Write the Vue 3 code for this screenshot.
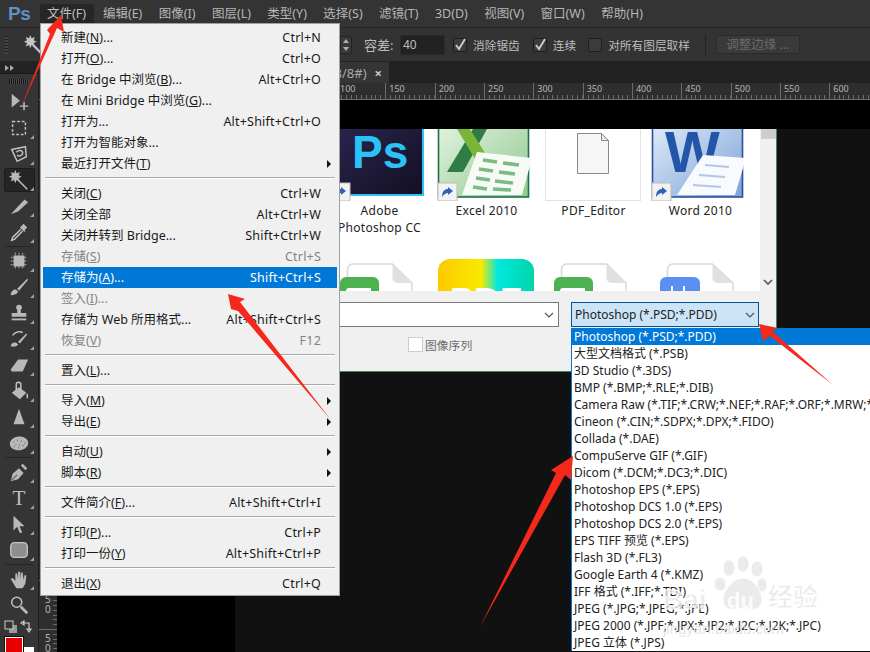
<script setup>
const topMenus = ['文件(F)', '编辑(E)', '图像(I)', '图层(L)', '类型(Y)', '选择(S)', '滤镜(T)', '3D(D)', '视图(V)', '窗口(W)', '帮助(H)']

const rawMenu = [
  ['新建(&N)...', 'Ctrl+N'], ['打开(&O)...', 'Ctrl+O'], ['在 Bridge 中浏览(&B)...', 'Alt+Ctrl+O'],
  ['在 Mini Bridge 中浏览(&G)...', ''], ['打开为...', 'Alt+Shift+Ctrl+O'], ['打开为智能对象...', ''],
  ['最近打开文件(&T)', '', 'sub'], null,
  ['关闭(&C)', 'Ctrl+W'], ['关闭全部', 'Alt+Ctrl+W'], ['关闭并转到 Bridge...', 'Shift+Ctrl+W'],
  ['存储(&S)', 'Ctrl+S', 'off'], ['存储为(&A)...', 'Shift+Ctrl+S', 'on'], ['签入(&I)...', '', 'off'],
  ['存储为 Web 所用格式...', 'Alt+Shift+Ctrl+S'], ['恢复(&V)', 'F12', 'off'], null,
  ['置入(&L)...', ''], null,
  ['导入(&M)', '', 'sub'], ['导出(&E)', '', 'sub'], null,
  ['自动(&U)', '', 'sub'], ['脚本(&R)', '', 'sub'], null,
  ['文件简介(&F)...', 'Alt+Shift+Ctrl+I'], null,
  ['打印(&P)...', 'Ctrl+P'], ['打印一份(&Y)', 'Alt+Shift+Ctrl+P'], null,
  ['退出(&X)', 'Ctrl+Q']
]
const menu = rawMenu.map((r, i) => {
  if (!r) return { id: i, sep: true }
  const k = r[0].indexOf('&')
  return {
    id: i,
    before: k < 0 ? r[0] : r[0].slice(0, k),
    key: k < 0 ? '' : r[0][k + 1],
    after: k < 0 ? '' : r[0].slice(k + 2),
    short: r[1],
    kind: r[2] || ''
  }
})

const formats = ['Photoshop (*.PSD;*.PDD)', '大型文档格式 (*.PSB)', '3D Studio (*.3DS)', 'BMP (*.BMP;*.RLE;*.DIB)',
  'Camera Raw (*.TIF;*.CRW;*.NEF;*.RAF;*.ORF;*.MRW;*.DNG)', 'Cineon (*.CIN;*.SDPX;*.DPX;*.FIDO)', 'Collada (*.DAE)',
  'CompuServe GIF (*.GIF)', 'Dicom (*.DCM;*.DC3;*.DIC)', 'Photoshop EPS (*.EPS)', 'Photoshop DCS 1.0 (*.EPS)',
  'Photoshop DCS 2.0 (*.EPS)', 'EPS TIFF 预览 (*.EPS)', 'Flash 3D (*.FL3)', 'Google Earth 4 (*.KMZ)',
  'IFF 格式 (*.IFF;*.TDI)', 'JPEG (*.JPG;*.JPEG;*.JPE)', 'JPEG 2000 (*.JPF;*.JPX;*.JP2;*.J2C;*.J2K;*.JPC)', 'JPEG 立体 (*.JPS)']

const rulerMarks = [100, 150, 200, 250, 300, 350, 400, 450, 500, 550, 600]
const vMarks = ['450', '500']

const wandF = 'M8 1l1.4 3.6L13 3.2l-1.4 3.6L15 8.5l-3.4 1.4L13 13.5l-3.6-1.4L8 15.5l-1.4-3.4L3 13.5l1.4-3.6L1 8.5l3.4-1.7L3 3.2l3.6 1.4z'
const tools = [
  { f: ['M4 3v15l9-7.5z'], s: ['M13 16.5h9M17.5 12v9'], flag: false },
  { s: ['M5 5h14v14H5z'], dash: true, flag: true },
  { s: ['M4 7l15-3 1 11-10 5z', 'M9 10c3-3 7-2 7 1s-5 4-6 2'], flag: true },
  { f: [wandF], s: ['M11 12l10 10'], flag: true, active: true },
  { f: ['M3 21L18 5l4 3-11 10z'], flag: true },
  { f: ['M14 6l3-3 4 4-3 3 1 1-1 1-5-5 1-1z'], s: ['M14 9l-9 9-1 3 3-1 9-9'], flag: true },
  'sep',
  { f: ['M6 6h12v12H6z'], s: ['M3 8h18M3 12h18M3 16h18M8 3v18M12 3v18M16 3v18'], thin: true, flag: true },
  { f: ['M3 21c0-4 3-7 6-6l2 2c-1 3-4 4-8 4z', 'M10 14L21 3l1 1-10 12z'], flag: true },
  { f: ['M12 3a3 3 0 0 1 2 5.4V12h6v4H4v-4h6V8.4A3 3 0 0 1 12 3z', 'M4 18h16v2H4z'], flag: true },
  { f: ['M3 20c0-3 3-5 6-4l2 2c-1 2-4 3-8 2z', 'M11 15l9-9 1 1-8 10z'], s: ['M5 8c3-4 8-5 11-3'], flag: true },
  { f: ['M3 17L11 6h11l-6 13H4z'], flag: true },
  { f: ['M4 14l8-6 8 6-7 7z'], s: ['M9 11V5a2.5 2.5 0 0 1 5 0v6', 'M21 15v5'], flag: true },
  { f: ['M12 3l6 17H6z'], flag: true },
  { f: ['M2 13c0-5 6-8 10-8s10 2 10 7-6 8-10 8-10-2-10-7z'], d: ['M6 11h1M10 9h1M14 10h1M18 12h1M8 14h1M12 14h1M16 15h1M6 16h1M11 17h1'], flag: true },
  'sep',
  { f: ['M3 22l2-8 7-6 5 5-6 7z', 'M14 5l2-2 5 5-2 2z'], d: ['M4 21l6-6'], flag: true },
  { text: 'T', flag: true },
  { f: ['M6 3v16l4-4 3 7 2.5-1-3-6.5H18z'], flag: true },
  { shape: true, flag: true },
  'sep',
  { f: ['M3 12l2-1 3 3V6l2 0 1 6V4h2l1 8V5h2l1 8 1-5h2l-1 9-3 5H9z'], flag: true },
  { s: ['M4 9a5.5 5.5 0 1 0 11 0a5.5 5.5 0 1 0-11 0'], thick: ['M14 14l7 7'], flag: false }
]
const toolList = tools.map((t, i) => ({ ...t, id: i, sep: t === 'sep' }))
</script>

<template>
  <div class="app">
    <header class="menubar">
      <span class="logo">Ps</span>
      <div class="top-items">
        <span v-for="(m, i) in topMenus" :key="m" class="top-item" :class="{ open: i === 0 }">{{ m }}</span>
      </div>
    </header>

    <div class="options">
      <span class="opt-grip"></span>
      <svg class="opt-wand" viewBox="0 0 24 24" width="22" height="22">
        <path :d="wandF" fill="#c4c4c4" />
        <path d="M11 12l11 11" stroke="#c4c4c4" stroke-width="2.5" />
      </svg>
      <span class="stepper">
        <svg viewBox="0 0 8 12" width="8" height="12"><path d="M4 0l3 4H1zM4 12L1 8h6z" fill="#b0b0b0" /></svg>
      </span>
      <span class="opt-label tol">容差:</span>
      <span class="opt-input">40</span>
      <span class="chk first"><svg viewBox="0 0 14 14" width="14" height="14"><path d="M3 7l3 4 6-10" fill="none" stroke="#c8c8c8" stroke-width="2" /></svg></span>
      <span class="opt-label">消除锯齿</span>
      <span class="chk second"><svg viewBox="0 0 14 14" width="14" height="14"><path d="M3 7l3 4 6-10" fill="none" stroke="#c8c8c8" stroke-width="2" /></svg></span>
      <span class="opt-label">连续</span>
      <span class="chk"></span>
      <span class="opt-label">对所有图层取样</span>
      <span class="opt-sep"></span>
      <span class="opt-btn">调整边缘 ...</span>
    </div>

    <div class="work">
      <aside class="toolbar">
        <div class="tb-head"><svg viewBox="0 0 10 6" width="10" height="6"><path d="M0 0l4 3-4 3zM5 0l4 3-4 3z" fill="#a8a8a8" /></svg></div>
        <div class="tb-grip"></div>
        <template v-for="t in toolList" :key="t.id">
          <div v-if="t.sep" class="tb-sep"></div>
          <div v-else class="tool" :class="{ active: t.active }">
            <svg viewBox="0 0 24 24" width="22" height="22">
              <text v-if="t.text" x="12" y="20" text-anchor="middle" class="t-glyph">{{ t.text }}</text>
              <rect v-if="t.shape" x="3" y="4" width="18" height="16" rx="4" fill="#8e8e8e" stroke="#c4c4c4" stroke-width="1.5" />
              <path v-for="d in t.f" :key="d" :d="d" fill="#b8b8b8" />
              <path v-for="d in t.s" :key="d" :d="d" fill="none" stroke="#c0c0c0" :stroke-width="t.thin ? 1 : 1.6" :stroke-dasharray="t.dash ? '3 2' : t.thin ? '2 1' : null" />
              <path v-for="d in t.d" :key="d" :d="d" fill="none" stroke="#6c6c6c" stroke-width="1.4" />
              <path v-for="d in t.thick" :key="d" :d="d" stroke="#b8b8b8" stroke-width="3" />
            </svg>
            <span v-if="t.flag" class="flag"></span>
          </div>
        </template>
        <div class="swap-row">
          <svg viewBox="0 0 30 14" width="30" height="14">
            <rect x="5" y="5" width="8" height="8" fill="#999" />
            <rect x="1" y="1" width="8" height="8" fill="#333" stroke="#ccc" />
            <path d="M19 3h6v7M17 3l3-2v4zM25 12l-2-3h4z" fill="none" stroke="#ccc" stroke-width="1.2" />
          </svg>
        </div>
        <div class="swatches">
          <span class="fg"></span>
          <span class="bg"></span>
        </div>
      </aside>

      <main class="doc">
        <div class="tabs"><div class="tab"><span>100% (RGB/8#)</span><span class="tab-x">×</span></div></div>
        <div class="ruler">
          <div v-for="m in rulerMarks" :key="m" class="mark"><span>{{ m }}</span></div>
        </div>
        <div class="doc-body">
          <div class="vruler">
            <div v-for="v in vMarks" :key="v" class="vmark"><span v-for="(c, i) in v" :key="i">{{ c }}</span></div>
          </div>
          <div class="stage">
            <div class="band"></div>
            <div class="black-col"></div>
            <section class="dialog">
              <div class="browser">
                <div class="files">
                  <div class="cell">
                    <svg viewBox="0 0 107 72" width="107" height="72">
                      <defs><linearGradient id="psg" x1="0" y1="0" x2="1" y2="1"><stop offset="0" stop-color="#2c2750" /><stop offset="1" stop-color="#120f24" /></linearGradient></defs>
                      <rect x="4" y="-10" width="93" height="76" fill="url(#psg)" stroke="#2bc3f7" stroke-width="2" />
                      <text x="26" y="39" class="ps-text">Ps</text>
                      <rect x="5" y="54" width="19" height="18" fill="#f2f2f2" stroke="#bbb" />
                      <path d="M9 68c0-6 3-8 6-8v-2l5 4-5 4v-2c-2 0-4 1-6 4z" fill="#2b63b5" />
                    </svg>
                    <div class="label">Adobe<br />Photoshop CC</div>
                  </div>
                  <div class="cell">
                    <svg viewBox="0 0 107 72" width="107" height="72">
                      <defs><linearGradient id="xlg" x1="0" y1="0" x2="1" y2="1"><stop offset="0" stop-color="#e6f4e2" /><stop offset="1" stop-color="#8fc98f" /></linearGradient></defs>
                      <rect x="5.5" y="-10" width="90" height="78" fill="url(#xlg)" stroke="#1e7145" stroke-width="1.6" />
                      <polygon points="40,0 54,0 30,43 14,43" fill="#2f7d44" />
                      <polygon points="24,0 37,0 64,43 50,43" fill="#7ab53a" />
                      <polygon points="44,23 99,29 89,66 29,66" fill="#f7fbf6" />
                      <path d="M50 31l14 2M70 34l16 2M46 40l14 2M66 43l16 2M43 49l14 2M62 52l18 2M40 58l14 2M60 60l18 1" stroke="#7dbb84" stroke-width="3.5" />
                      <rect x="5" y="54" width="19" height="18" fill="#f2f2f2" stroke="#bbb" />
                      <path d="M9 68c0-6 3-8 6-8v-2l5 4-5 4v-2c-2 0-4 1-6 4z" fill="#2b63b5" />
                    </svg>
                    <div class="label">Excel 2010</div>
                  </div>
                  <div class="cell">
                    <svg viewBox="0 0 107 72" width="107" height="72">
                      <rect x="5.5" y="-10" width="95" height="81.5" fill="#fff" stroke="#e2e2e2" />
                      <path d="M37.5 4.5h24l7 7v33h-31z" fill="#f6f6f6" stroke="#8a8a8a" />
                      <path d="M61.5 4.5v7h7z" fill="#e4e4e4" stroke="#8a8a8a" />
                    </svg>
                    <div class="label">PDF_Editor</div>
                  </div>
                  <div class="cell">
                    <svg viewBox="0 0 107 72" width="107" height="72">
                      <defs><linearGradient id="wdg" x1="0" y1="0" x2="1" y2="1"><stop offset="0" stop-color="#e3edf8" /><stop offset="1" stop-color="#7ba3d8" /></linearGradient></defs>
                      <rect x="5.5" y="-10" width="90" height="78" fill="url(#wdg)" stroke="#2b4f9e" stroke-width="1.6" />
                      <text x="18" y="43" class="word-text">W</text>
                      <polygon points="56,26 99,29 88,66 30,66" fill="#f8fafd" />
                      <path d="M58 36l24 2M52 46l26 2M46 56l28 2" stroke="#b4c6e4" stroke-width="2" />
                      <rect x="5" y="54" width="19" height="18" fill="#f2f2f2" stroke="#bbb" />
                      <path d="M9 68c0-6 3-8 6-8v-2l5 4-5 4v-2c-2 0-4 1-6 4z" fill="#2b63b5" />
                    </svg>
                    <div class="label">Word 2010</div>
                  </div>
                  <div class="cell low">
                    <svg viewBox="0 0 107 32" width="107" height="32">
                      <path d="M21.5 10a5 5 0 0 1 5-5h40l19.500 19v10h-64.500z" fill="#fff" stroke="#d8d8d8" stroke-width="1.500" />
                      <path d="M66.500 5v14a5 5 0 0 0 5 5h14.500z" fill="#e0e0e0" />
                      <rect x="14" y="18" width="39" height="30" rx="6" fill="#4cb250" />
                      <path d="M20 32q0-3 3-3h22v3z" fill="#fff" />
                    </svg>
                  </div>
                  <div class="cell low">
                    <svg viewBox="0 0 107 32" width="107" height="32">
                      <defs><linearGradient id="pdfg" x1="0" y1="0" x2="1" y2="0"><stop offset="0" stop-color="#fdc800" /><stop offset=".45" stop-color="#f8ea00" /><stop offset=".62" stop-color="#00e8e0" /><stop offset="1" stop-color="#00d6a8" /></linearGradient></defs>
                      <rect x="5" y="0" width="96" height="48" rx="12" fill="url(#pdfg)" />
                      <text x="53" y="55" text-anchor="middle" class="pdf-text">PDF</text>
                    </svg>
                  </div>
                  <div class="cell low">
                    <svg viewBox="0 0 107 32" width="107" height="32">
                      <path d="M21.500 10a5 5 0 0 1 5-5h40l19.500 19v10h-64.500z" fill="#fff" stroke="#d8d8d8" stroke-width="1.500" />
                      <path d="M66.500 5v14a5 5 0 0 0 5 5h14.500z" fill="#e0e0e0" />
                      <rect x="14" y="18" width="39" height="30" rx="6" fill="#4cb250" />
                      <path d="M20 32q0-3 3-3h22v3z" fill="#fff" />
                    </svg>
                  </div>
                  <div class="cell low">
                    <svg viewBox="0 0 107 32" width="107" height="32">
                      <path d="M20.500 10a5 5 0 0 1 5-5h40l20.500 19v10h-65.500z" fill="#fff" stroke="#d8d8d8" stroke-width="1.500" />
                      <path d="M65.500 5v14a5 5 0 0 0 5 5h15.500z" fill="#e0e0e0" />
                      <rect x="13" y="18" width="40" height="30" rx="6" fill="#5b8ff2" />
                      <path d="M24 32v-5h2v5zM36 32v-5h2v5z" fill="#fff" />
                    </svg>
                  </div>
                </div>
                <div class="scrollbar">
                  <span class="thumb"></span>
                  <svg viewBox="0 0 10 6" width="10" height="6"><path d="M1 1l4 4 4-4" fill="none" stroke="#555" stroke-width="1.600" /></svg>
                </div>
              </div>
              <div class="footer">
                <div class="selects">
                  <div class="combo name">
                    <svg viewBox="0 0 10 6" width="10" height="6"><path d="M1 1l4 4 4-4" fill="none" stroke="#555" stroke-width="1.200" /></svg>
                  </div>
                  <div class="format-wrap">
                    <div class="combo format">
                      <span>Photoshop (*.PSD;*.PDD)</span>
                      <svg viewBox="0 0 10 6" width="10" height="6"><path d="M1 1l4 4 4-4" fill="none" stroke="#555" stroke-width="1.200" /></svg>
                    </div>
                    <ul class="dropdown">
                      <li v-for="(f, i) in formats" :key="f" :class="{ sel: i === 0 }">{{ f }}</li>
                    </ul>
                  </div>
                </div>
                <div class="seq"><span class="seq-box"></span><span>图像序列</span></div>
              </div>
            </section>
          </div>
        </div>
      </main>
    </div>

    <nav class="filemenu">
      <template v-for="m in menu" :key="m.id">
        <div v-if="m.sep" class="msep"></div>
        <div v-else class="mrow" :class="m.kind">
          <span class="mlabel">{{ m.before }}<u v-if="m.key">{{ m.key }}</u>{{ m.after }}</span>
          <span class="mshort">{{ m.short }}</span>
          <span v-if="m.kind === 'sub'" class="marrow"></span>
        </div>
      </template>
    </nav>

    <svg class="watermark" viewBox="0 0 170 90" width="170" height="90">
      <g fill="#e4e4e4" fill-opacity=".75" stroke="#fff" stroke-width=".8">
        <ellipse cx="69" cy="12" rx="6" ry="8" />
        <ellipse cx="83" cy="8" rx="6" ry="8" />
        <ellipse cx="97" cy="13" rx="6" ry="8" />
        <ellipse cx="60" cy="28" rx="6" ry="7" />
        <ellipse cx="102" cy="29" rx="5" ry="7" />
        <path d="M83 22c10 0 19 12 19 22 0 7-6 10-10 9-5-1-13-1-18 0-5 1-11-2-11-9 0-9 10-22 20-22z" />
        <text x="3" y="53" class="wm-bai">Bai</text>
        <text x="108" y="50" class="wm-jy">经验</text>
      </g>
      <text x="67" y="52" class="wm-du">du</text>
      <text x="3" y="78" class="wm-url">jingyan.baidu.com</text>
    </svg>

    <svg class="arrows" viewBox="0 0 870 652" width="870" height="652">
      <g fill="#f5281c">
        <polygon points="20,110 50,34 47,30 61,15 64,32 57,28" />
        <polygon points="228,294 245,299 240,302 331,420 238,311 231,309" />
        <polygon points="759,324 778,328 772,331 833,385 770,336 763,341" />
        <polygon points="573,456 571,480 565,475 480,627 556,473 551,470" />
      </g>
    </svg>
  </div>
</template>

<style scoped>
.app {
  position: relative;
  width: 870px;
  height: 652px;
  overflow: hidden;
  display: flex;
  flex-direction: column;
  background: #111;
  font-family: "Noto Sans", "Noto Sans CJK SC", sans-serif;
  font-size: 13px;
  color: #bdbdbd;
}
.menubar {
  height: 28px;
  flex: none;
  background: #343434;
  border-bottom: 1px solid #262626;
  box-sizing: border-box;
  display: flex;
  align-items: center;
}
.logo {
  width: 40px;
  padding-left: 8px;
  box-sizing: border-box;
  font: bold 19px "Liberation Sans", sans-serif;
  letter-spacing: -.5px;
  color: #5f90c2;
}
.top-items {
  display: flex;
  gap: 16.4px;
  padding-left: 7px;
  font-size: 12.5px;
  color: #b6b6b6;
  white-space: nowrap;
}
.top-item {
  line-height: 20px;
}
.top-item.open {
  margin-left: -7px;
  margin-right: -7.5px;
  padding: 0 8px 0 7px;
  background: #262626;
  border-radius: 2px;
  color: #c0c0c0;
}
.options {
  height: 34px;
  flex: none;
  box-sizing: border-box;
  background: #333;
  border-bottom: 1px solid #232323;
  display: flex;
  align-items: center;
  padding-left: 5px;
  font-size: 11.7px;
}
.opt-grip {
  width: 3px;
  height: 18px;
  background: repeating-linear-gradient(#1e1e1e 0 1px, #444 1px 3px);
}
.opt-wand {
  margin-left: 15px;
}
.stepper {
  margin-left: 295px;
  width: 12px;
  height: 18px;
  box-sizing: border-box;
  background: #3a3a3a;
  border: 1px solid #222;
  border-radius: 0 3px 3px 0;
  display: flex;
  align-items: center;
  justify-content: center;
}
.opt-label {
  margin-left: 6px;
  white-space: nowrap;
}
.opt-label.tol {
  margin-left: 12px;
  width: 36px;
  font-size: 13px;
}
.opt-input {
  width: 45px;
  height: 20px;
  box-sizing: border-box;
  margin-right: 8px;
  padding-left: 2px;
  background: #222;
  border: 1px solid #2a2a2a;
  line-height: 18px;
  font-size: 12px;
}
.chk {
  width: 14px;
  height: 14px;
  box-sizing: border-box;
  margin-left: 12px;
  background: #3c3c3c;
  border: 1px solid #1e1e1e;
  border-radius: 2px;
  display: block;
  line-height: 0;
}
.chk.first {
  margin-left: 0;
}
.chk.second {
  margin-left: 13px;
}
.chk svg {
  margin: -1px;
}
.opt-sep {
  width: 1px;
  height: 22px;
  margin-left: 15px;
  background: #232323;
}
.opt-btn {
  margin-left: 10px;
  width: 84px;
  height: 19px;
  box-sizing: border-box;
  background: #3a3a3a;
  border: 1px solid #2a2a2a;
  border-radius: 2px;
  color: #6a6a6a;
  font-size: 12.500px;
  text-align: center;
  line-height: 17px;
  white-space: nowrap;
}
.work {
  flex: 1;
  display: flex;
  min-height: 0;
}
.toolbar {
  width: 39px;
  flex: none;
  background: #353535;
  border-right: 1px solid #202020;
  box-sizing: border-box;
  display: flex;
  flex-direction: column;
  overflow: hidden;
}
.tb-head {
  height: 11px;
  background: #232323;
  border-bottom: 1px solid #1a1a1a;
  padding-left: 5px;
  display: flex;
  align-items: center;
  flex: none;
}
.tb-grip {
  height: 5px;
  margin: 5px 9px 5px;
  background: repeating-linear-gradient(90deg, #151515 0 1px, #4a4a4a 1px 2px);
  flex: none;
}
.tool {
  height: 26px;
  flex: none;
  position: relative;
  display: flex;
  align-items: center;
  justify-content: center;
}
.tool.active::before {
  content: "";
  position: absolute;
  left: 4px;
  right: 3px;
  top: 1px;
  bottom: 1px;
  background: #252525;
  border: 1px solid #1b1b1b;
  border-radius: 2px;
}
.tool svg {
  position: relative;
}
.t-glyph {
  font: 23px "Liberation Serif", serif;
  fill: #c0c0c0;
}
.flag {
  position: absolute;
  right: 4px;
  bottom: 2px;
  width: 0;
  height: 0;
  border-left: 4px solid transparent;
  border-bottom: 4px solid #a0a0a0;
}
.tb-sep {
  height: 3px;
  flex: none;
  position: relative;
  margin: 0 5px;
  background: linear-gradient(transparent 1px, #232323 1px 2px, transparent 2px);
}
.swap-row {
  height: 14px;
  padding: 2px 0 0 4px;
  flex: none;
}
.swatches {
  position: relative;
  height: 20px;
  margin-top: 3px;
  flex: none;
}
.fg {
  position: absolute;
  left: 5px;
  top: 0;
  width: 18px;
  height: 20px;
  box-sizing: border-box;
  background: #e60000;
  border: 1px solid #fff;
  outline: 1px solid #111;
  z-index: 1;
}
.bg {
  position: absolute;
  left: 23px;
  top: 10px;
  width: 11px;
  height: 14px;
  background: #fff;
}
.doc {
  flex: 1;
  min-width: 0;
  display: flex;
  flex-direction: column;
}
.tabs {
  height: 21px;
  flex: none;
  background: #212121;
  display: flex;
}
.tab {
  width: 350px;
  background: #353535;
  color: #a8a8a8;
  display: flex;
  justify-content: flex-end;
  align-items: center;
  gap: 8px;
  padding-right: 7px;
  box-sizing: border-box;
  white-space: nowrap;
  overflow: hidden;
}
.tab-x {
  font-size: 13px;
  font-weight: bold;
  color: #c8c8c8;
}
.ruler {
  height: 17px;
  flex: none;
  box-sizing: border-box;
  background: #2e2e2e;
  border-bottom: 1px solid #6c6c6c;
  padding-left: 297px;
  display: flex;
}
.mark {
  width: 49.33px;
  flex: none;
  box-sizing: border-box;
  border-left: 1px solid #6c6c6c;
  padding-left: 3px;
  font-size: 9px;
  line-height: 12px;
  color: #b4b4b4;
  background: repeating-linear-gradient(90deg, transparent 0 3.93px, #6c6c6c 3.93px 4.93px) bottom / 100% 4px no-repeat;
}
.doc-body {
  flex: 1;
  min-height: 0;
  display: flex;
}
.vruler {
  width: 18px;
  flex: none;
  box-sizing: border-box;
  background: #2e2e2e;
  padding-top: 480px;
  overflow: hidden;
}
.vmark {
  height: 49.33px;
  box-sizing: border-box;
  border-top: 1px solid #6c6c6c;
  padding: 3px 0 0 6px;
  font-size: 10px;
  line-height: 10px;
  color: #b4b4b4;
  display: flex;
  flex-direction: column;
  background: repeating-linear-gradient(transparent 0 3.93px, #6c6c6c 3.93px 4.93px) right / 4px 100% no-repeat;
}
.stage {
  flex: 1;
  min-width: 0;
  display: grid;
  grid-template-columns: 178px 542px 1fr;
  grid-template-rows: 29px 243px 1fr;
  background: #111;
}
.band {
  grid-column: 1 / -1;
  background: #000;
}
.black-col {
  grid-column: 1;
  grid-row: 2 / 4;
  background: #000;
}
.dialog {
  grid-column: 2;
  grid-row: 2;
  display: flex;
  flex-direction: column;
  background: #f0f0f0;
  border-right: 1px solid #3d8a55;
  border-bottom: 1px solid #3d8a55;
  box-sizing: border-box;
  color: #222;
}
.browser {
  height: 162px;
  flex: none;
  display: flex;
  background: #fff;
  overflow: hidden;
}
.files {
  flex: 1;
  padding-left: 91px;
  display: grid;
  grid-template-columns: repeat(4, 107px);
  grid-template-rows: 130px 32px;
}
.cell {
  overflow: hidden;
  line-height: 17px;
}
.cell svg {
  display: block;
}
.label {
  text-align: center;
  font-size: 12px;
  color: #222;
  letter-spacing: .3px;
  white-space: nowrap;
  padding-top: 1px;
}
.ps-text {
  font: 46px "Liberation Sans", sans-serif;
  font-weight: bold;
  fill: #2bc3f7;
}
.word-text {
  font: bold 58px "Liberation Sans", sans-serif;
  fill: #2456a8;
}
.pdf-text {
  font: bold 36px "Liberation Sans", sans-serif;
  fill: #fff;
}
.scrollbar {
  width: 16px;
  flex: none;
  background: #f0f0f0;
  display: flex;
  flex-direction: column;
  align-items: center;
  justify-content: space-between;
  padding-bottom: 6px;
  box-sizing: border-box;
}
.thumb {
  width: 15px;
  height: 10px;
  background: #cdcdcd;
}
.footer {
  flex: 1;
  display: flex;
  flex-direction: column;
}
.selects {
  display: flex;
  margin-top: 11px;
  padding-left: 5px;
  gap: 12px;
}
.combo {
  height: 25px;
  box-sizing: border-box;
  display: flex;
  align-items: center;
  justify-content: flex-end;
  padding-right: 4px;
  background: #fff;
  border: 1px solid #7a7a7a;
}
.combo.name {
  width: 319px;
}
.format-wrap {
  position: relative;
  width: 188px;
}
.combo.format {
  justify-content: space-between;
  background: #cce4f7;
  border: 1.5px solid #005499;
  padding: 0 3px 0 3px;
}
.format span,
.dropdown li {
  font-size: 12px;
  color: #222;
}
.dropdown {
  position: absolute;
  left: 0;
  top: 26px;
  width: 320px;
  margin: 0;
  padding: 0;
  list-style: none;
  background: #fff;
  border-left: 1px solid #0078d7;
  z-index: 2;
}
.dropdown li {
  height: 17px;
  line-height: 17px;
  padding-left: 2px;
  white-space: nowrap;
}
.dropdown li.sel {
  background: #0078d7;
  color: #fff;
}
.seq {
  display: flex;
  align-items: center;
  gap: 2px;
  margin: 9px 0 0 173px;
  color: #6d6d6d;
  font-size: 11.8px;
}
.seq-box {
  width: 13px;
  height: 13px;
  background: #fff;
  border: 1px solid #ccc;
}
.filemenu {
  position: absolute;
  left: 40px;
  top: 23px;
  width: 300px;
  height: 573px;
  box-sizing: border-box;
  padding: 3px 2px 0 2px;
  background: #f0f0f0;
  border: 1px solid #a0a0a0;
  color: #1a1a1a;
  font-size: 12.500px;
}
.mrow {
  position: relative;
  height: 21px;
  line-height: 21px;
  display: flex;
  justify-content: space-between;
  padding: 0 16px 0 18px;
  white-space: nowrap;
}
.mrow.off {
  color: #848484;
}
.mrow.on {
  background: #0078d7;
  color: #fff;
}
.mshort {
  letter-spacing: .2px;
}
.marrow {
  position: absolute;
  right: 6px;
  top: 7px;
  border-left: 4px solid #111;
  border-top: 4px solid transparent;
  border-bottom: 4px solid transparent;
}
.msep {
  height: 9px;
  position: relative;
  margin: 0 2px;
  background: linear-gradient(transparent 3px, #a8a8a8 3px 4px, #fff 4px 5px, transparent 5px);
}
.watermark {
  position: absolute;
  left: 660px;
  top: 556px;
  z-index: 4;
  pointer-events: none;
}
.wm-bai {
  font: bold 28px "Liberation Sans", sans-serif;
}
.wm-du {
  font: bold 22px "Liberation Sans", sans-serif;
  fill: #fff;
  fill-opacity: .85;
}
.wm-jy {
  font: bold 25px "Noto Sans CJK SC", sans-serif;
}
.wm-url {
  font: 15px "Liberation Sans", sans-serif;
  fill: #d8d8d8;
  fill-opacity: .7;
}
.arrows {
  position: absolute;
  left: 0;
  top: 0;
  z-index: 5;
  pointer-events: none;
}
</style>
